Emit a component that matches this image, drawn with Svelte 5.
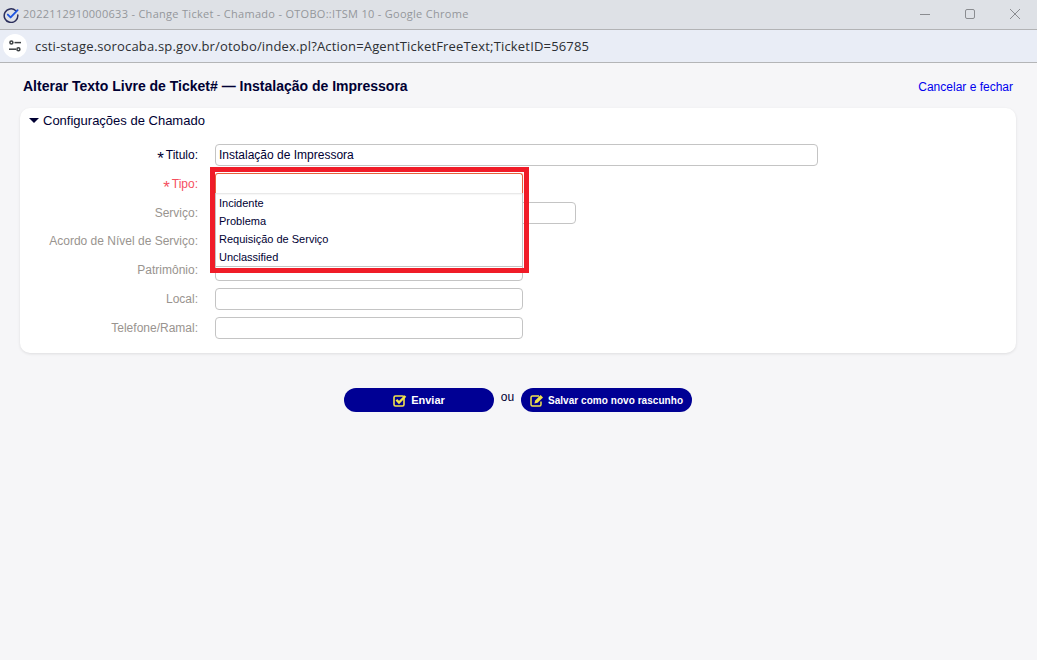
<script lang="ts">
  const fields = [
    { label: 'Titulo', value: 'Instalação de Impressora', size: 'full', mandatory: true },
    { label: 'Tipo', value: '', size: 'mid', mandatory: true, error: true, dropdown: true },
    { label: 'Serviço', value: '', size: 'wide' },
    { label: 'Acordo de Nível de Serviço', value: '', size: 'mid', hidden: true },
    { label: 'Patrimônio', value: '', size: 'mid' },
    { label: 'Local', value: '', size: 'mid' },
    { label: 'Telefone/Ramal', value: '', size: 'mid' },
  ]

  const options = ['Incidente', 'Problema', 'Requisição de Serviço', 'Unclassified']
</script>

<div class="window">
  <header class="titlebar">
    <svg class="favicon" width="16" height="16" viewBox="0 0 16 16" fill="none">
      <path d="M12.800 3.800A6.800 6.800 0 1 0 14.800 8" stroke="#2b2f5c" stroke-width="1.500" stroke-linecap="round" />
      <path d="M4.800 7.600 7.600 10.400 14.600 3.200" stroke="#1f56e0" stroke-width="1.900" stroke-linecap="round" stroke-linejoin="round" />
    </svg>
    <span class="window-title">2022112910000633 - Change Ticket - Chamado - OTOBO::ITSM 10 - Google Chrome</span>
    <div class="window-controls">
      <svg width="12" height="12" viewBox="0 0 12 12"><path d="M1 6.500h10" stroke="#8a8c90" stroke-width="1" /></svg>
      <svg width="12" height="12" viewBox="0 0 12 12" fill="none"><rect x="1.500" y="1.500" width="9" height="9" rx="1.500" stroke="#8a8c90" /></svg>
      <svg width="12" height="12" viewBox="0 0 12 12" fill="none"><path d="M1 1l10 10M11 1 1 11" stroke="#8a8c90" /></svg>
    </div>
  </header>

  <div class="urlbar">
    <span class="site-icon">
      <svg width="14" height="12" viewBox="0 0 14 12" fill="none" stroke="#3c4043" stroke-width="1.500">
        <circle cx="3.400" cy="2.600" r="1.500" />
        <path d="M6.500 2.600h6.500" />
        <circle cx="10.400" cy="9.200" r="1.500" />
        <path d="M1 9.200h7" />
      </svg>
    </span>
    <span class="url">csti-stage.sorocaba.sp.gov.br/otobo/index.pl?Action=AgentTicketFreeText;TicketID=56785</span>
  </div>

  <main class="page">
    <div class="page-head">
      <h1>Alterar Texto Livre de Ticket# — Instalação de Impressora</h1>
      <a href="#cancel">Cancelar e fechar</a>
    </div>

    <section class="card">
      <h2><span class="caret"></span>Configurações de Chamado</h2>
      <div class="form">
        {#each fields as field}
          <div class="label" class:error={field.error}>
            {#if field.mandatory}<span class="star">*</span>{/if}{field.label}:
          </div>
          <div class="control">
            {#if !field.hidden}
              <input class="field {field.size}" type="text" value={field.value} />
            {/if}
            {#if field.dropdown}
              <div class="highlight"></div>
              <div class="dropdown">
                <div class="search"></div>
                <ul>
                  {#each options as option}
                    <li>{option}</li>
                  {/each}
                </ul>
              </div>
            {/if}
          </div>
        {/each}
      </div>
    </section>

    <div class="actions">
      <button class="btn send">
        <svg width="14" height="13" viewBox="0 0 14 13" fill="none">
          <rect x="1" y="2" width="10" height="10" rx="1.500" stroke="#f2e34c" stroke-width="1.600" />
          <path d="M3.400 5.800 6 8.600 12.400 2" stroke="#f2e34c" stroke-width="2.400" />
        </svg>
        Enviar
      </button>
      <span class="or">ou</span>
      <button class="btn draft">
        <svg width="14" height="13" viewBox="0 0 14 13" fill="none">
          <path d="M9 2H2.500A1.500 1.500 0 0 0 1 3.500V10.500A1.500 1.500 0 0 0 2.500 12H9.500A1.500 1.500 0 0 0 11 10.500V7.500" stroke="#f2e34c" stroke-width="1.500" />
          <path d="M5.200 6.400 10.600 1l2.400 2.400L7.600 8.800 4.400 9.600Z" fill="#f2e34c" />
        </svg>
        <span>Salvar como novo rascunho</span>
      </button>
    </div>
  </main>
</div>

<style>
  :global(body) {
    margin: 0;
    background: #f6f6f8;
  }

  .window {
    width: 1037px;
    height: 660px;
    display: flex;
    flex-direction: column;
    overflow: hidden;
    font-family: 'Liberation Sans', Arial, sans-serif;
  }

  .titlebar {
    height: 29px;
    flex: none;
    box-sizing: content-box;
    display: flex;
    align-items: center;
    padding-left: 3px;
    background: #dee1e6;
    border-bottom: 1px solid #b2b3b5;
  }

  .favicon {
    margin-right: 4px;
  }

  .window-title {
    position: relative;
    top: -1px;
    font-family: 'Open Sans', 'Noto Sans', sans-serif;
    font-size: 11px;
    letter-spacing: 0.29px;
    color: #94979b;
    white-space: nowrap;
  }

  .window-controls {
    margin-left: auto;
    display: flex;
    gap: 33px;
    padding-right: 16px;
    margin-top: -1px;
  }

  .urlbar {
    height: 32px;
    flex: none;
    display: flex;
    align-items: center;
    padding-left: 3px;
    background: #e9edf6;
    border-bottom: 1px solid #b4b5b7;
  }

  .site-icon {
    width: 24px;
    height: 24px;
    margin-right: 8px;
    border-radius: 50%;
    background: #fff;
    display: flex;
    align-items: center;
    justify-content: center;
  }

  .url {
    font-family: 'Open Sans', 'Noto Sans', sans-serif;
    font-size: 13px;
    letter-spacing: 0.17px;
    color: #2c2f33;
    white-space: nowrap;
  }

  .page {
    flex: 1;
    padding: 14px 21px 0 20px;
    background: #f6f6f8;
  }

  .page-head {
    height: 31px;
    display: flex;
    justify-content: space-between;
    padding: 0 3px;
    line-height: 18px;
  }

  h1 {
    margin: 0;
    font-size: 14px;
    font-weight: bold;
    color: #000033;
  }

  .page-head a {
    margin-top: 1px;
    font-size: 12px;
    color: #0000ee;
    text-decoration: none;
  }

  .card {
    height: 245px;
    box-sizing: border-box;
    padding-top: 5px;
    background: #fff;
    border-radius: 10px;
    box-shadow: 0 1px 3px rgba(0, 0, 0, 0.1);
  }

  h2 {
    margin: 0 0 16.400px 9px;
    font-size: 13px;
    line-height: 15px;
    font-weight: normal;
    color: #000033;
    display: flex;
    align-items: center;
  }

  .caret {
    width: 0;
    height: 0;
    margin-right: 4px;
    border-left: 5px solid transparent;
    border-right: 5px solid transparent;
    border-top: 5px solid #000033;
  }

  .form {
    display: grid;
    grid-template-columns: 178px 1fr;
    column-gap: 17px;
    grid-auto-rows: 22px;
    row-gap: 6.700px;
  }

  .label {
    font-size: 12px;
    line-height: 22px;
    text-align: right;
    color: #99948f;
    white-space: nowrap;
  }

  .form .label:first-child {
    color: #000033;
  }

  .label.error {
    color: #f5505f;
  }

  .star {
    display: inline-block;
    margin-right: 2px;
    font-size: 17px;
    line-height: 12px;
    font-weight: normal;
    vertical-align: -5px;
  }

  .control {
    position: relative;
  }

  .field {
    display: block;
    box-sizing: border-box;
    height: 22px;
    padding: 0 3px;
    background: #fff;
    border: 1px solid #c4c4c4;
    border-radius: 4px;
    font-family: inherit;
    font-size: 12px;
    color: #000033;
    outline: none;
  }

  .field.full {
    width: 603px;
  }

  .field.wide {
    width: 361px;
  }

  .field.mid {
    width: 308px;
  }

  .highlight {
    position: absolute;
    left: -5px;
    top: -6px;
    width: 309px;
    height: 96px;
    border: 5px solid #f01c28;
    z-index: 2;
  }

  .dropdown {
    position: absolute;
    left: 0;
    top: 0;
    width: 308px;
    z-index: 3;
    box-sizing: border-box;
    background: #fff;
  }

  .search {
    height: 20px;
    box-sizing: border-box;
    border: 1px solid #e8603c;
    border-bottom: none;
    border-radius: 3px 3px 0 0;
    box-shadow: 0 1px 2px rgba(0, 0, 0, 0.12);
  }

  .dropdown ul {
    list-style: none;
    margin: 0;
    padding: 1px 0 0;
    border: 1px solid #c4c4c4;
    border-top: none;
    height: 74px;
    box-sizing: border-box;
  }

  .dropdown li {
    height: 18px;
    padding-left: 3px;
    font-size: 11px;
    line-height: 18px;
    color: #000033;
  }

  .actions {
    display: flex;
    justify-content: center;
    align-items: flex-start;
    margin-top: 35px;
  }

  .btn {
    height: 24px;
    display: flex;
    align-items: center;
    justify-content: center;
    gap: 4px;
    border: none;
    border-radius: 12px;
    background: #000094;
    color: #fff;
    font-family: inherit;
    font-size: 11px;
    font-weight: bold;
    padding: 0;
  }

  .send {
    width: 150px;
  }

  .draft {
    width: 171px;
    font-size: 10px;
    letter-spacing: 0.05px;
  }

  .or {
    width: 27px;
    text-align: center;
    font-size: 12px;
    line-height: 18px;
    color: #000033;
  }
</style>
